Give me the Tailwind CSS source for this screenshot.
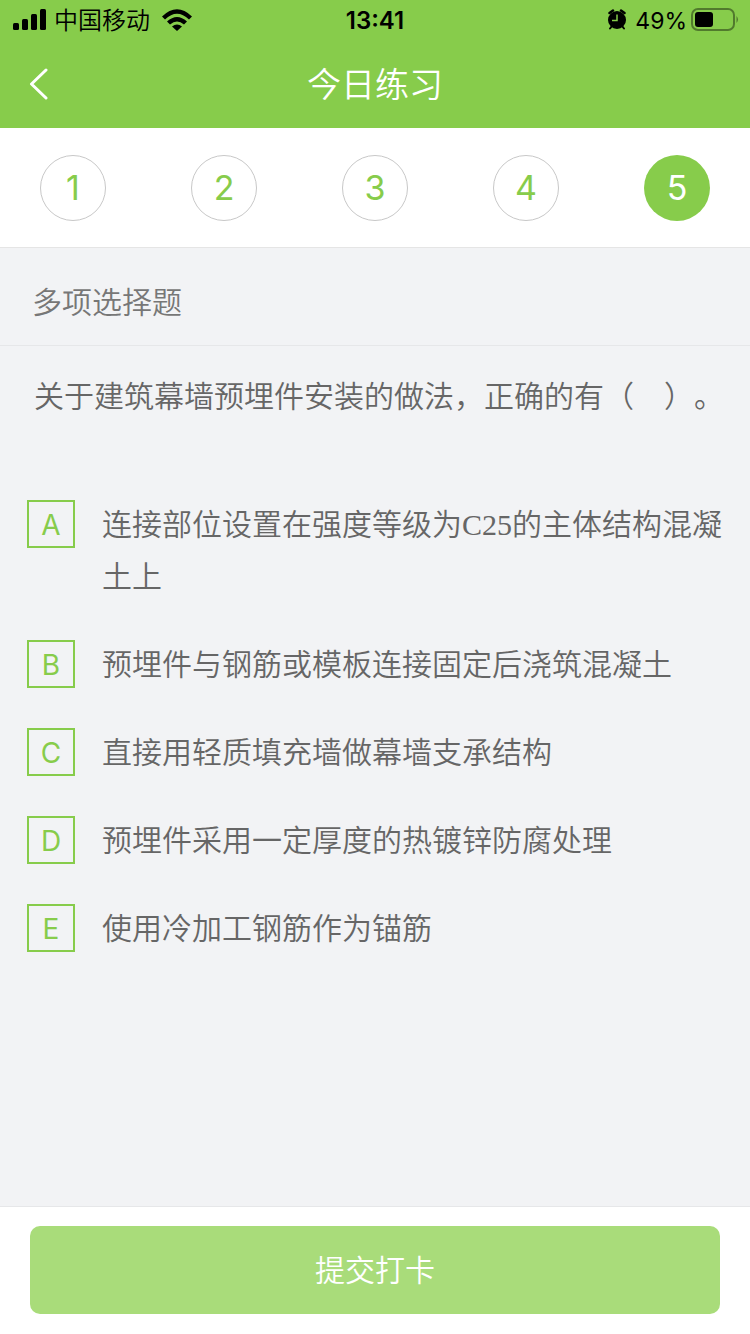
<!DOCTYPE html>
<html lang="zh-CN">
<head>
    <meta charset="UTF-8">
    <meta name="viewport" content="width=device-width, initial-scale=1.0">
    <title>今日练习</title>
    <script src="https://cdn.jsdelivr.net/npm/@tailwindcss/browser@4"></script>
    <style>
        body {
            font-family: Inter, 'Noto Sans CJK SC', sans-serif;
            text-spacing-trim: space-all;
        }
        .content-font {
            font-family: 'Liberation Serif', 'Noto Sans CJK SC', serif;
        }
    </style>
</head>
<body class="flex min-h-screen flex-col bg-[#f2f3f5] font-[350] text-[#666]">

    <header class="bg-[#87cc4b]">
        <!-- Status bar -->
        <div class="grid h-10 grid-cols-3 items-center pl-3 pr-3 text-2xl text-black">
            <div class="flex items-center">
                <svg class="mr-2 h-[22px] w-[34px]" viewBox="0 0 34 22" aria-hidden="true">
                    <rect x="1" y="14" width="6" height="7" rx="1.5"/>
                    <rect x="10" y="10" width="6" height="11" rx="1.5"/>
                    <rect x="19" y="5" width="6" height="16" rx="1.5"/>
                    <rect x="28" y="0" width="6" height="21" rx="1.5"/>
                </svg>
                <span class="mr-3 pt-0.5">中国移动</span>
                <svg class="h-[22px] w-[30px]" viewBox="0 0 30 22" aria-hidden="true">
                    <path d="M0 7.500 Q15 -7 30 7.500 L27 10.500 Q15 -1 3 10.500Z"/>
                    <path d="M5 12.500 Q15 3.500 25 12.500 L22 15.500 Q15 9.500 8 15.500Z"/>
                    <path d="M10 17.500 Q15 13.500 20 17.500 L15 22Z"/>
                </svg>
            </div>
            <div class="pt-0.5 text-center font-semibold">13:41</div>
            <div class="flex items-center justify-end">
                <svg class="mr-2 h-[22px] w-5" viewBox="0 0 20 22" aria-hidden="true">
                    <path d="M2.500 4 L6 1.500 M17.500 4 L14 1.500" stroke="#000" stroke-width="2.500" stroke-linecap="round"/>
                    <path d="M5 17 L3 19.500 M15 17 L17 19.500" stroke="#000" stroke-width="2" stroke-linecap="round"/>
                    <circle cx="10" cy="11" r="9"/>
                    <path d="M10 5.500 V11.500 H5" fill="none" stroke="#87cc4b" stroke-width="1.500"/>
                </svg>
                <span class="mr-1 pt-0.5 text-[23px] font-normal">49%</span>
                <svg class="-mr-px h-6 w-12" viewBox="0 0 48 24" aria-hidden="true">
                    <rect x="1" y="1" width="42" height="21" rx="6" fill="none" stroke="#000" stroke-opacity=".4" stroke-width="2"/>
                    <rect x="4" y="4" width="18" height="15" rx="3"/>
                    <path d="M45.500 8 Q48.500 11.500 45.500 15Z" fill-opacity=".4"/>
                </svg>
            </div>
        </div>

        <!-- Title bar -->
        <div class="grid h-22 grid-cols-[80px_1fr_80px] items-center text-white">
            <button type="button" aria-label="返回" class="flex h-full items-center pl-7">
                <svg class="h-8 w-6" viewBox="0 0 24 32" fill="none" stroke="currentColor" stroke-width="3" stroke-linecap="round" stroke-linejoin="round">
                    <path d="M18 2 L3.500 16 L18 30"/>
                </svg>
            </button>
            <h1 class="text-center text-[34px] font-[350]">今日练习</h1>
        </div>
    </header>

    <!-- Question numbers -->
    <nav class="flex h-30 items-center justify-between border-b border-[#e5e5e5] bg-white px-10 text-[34px] font-normal text-[#87cc4b]">
        <button type="button" class="size-[66px] rounded-full border border-[#c8c8c8]">1</button>
        <button type="button" class="size-[66px] rounded-full border border-[#c8c8c8]">2</button>
        <button type="button" class="size-[66px] rounded-full border border-[#c8c8c8]">3</button>
        <button type="button" class="size-[66px] rounded-full border border-[#c8c8c8]">4</button>
        <button type="button" aria-current="true" class="size-[66px] rounded-full bg-[#87cc4b] text-white">5</button>
    </nav>

    <h2 class="border-b border-[#e6e7e9] px-8 pt-7 pb-4 text-[30px] leading-[53px] font-[350] text-[#777]">多项选择题</h2>

    <main class="content-font flex-1 text-[30px] leading-[52px]">
        <p id="question" class="pt-[25px] pr-6 pl-[34px]">关于建筑幕墙预埋件安装的做法，正确的有（　）。</p>

        <!-- Answers -->
        <div role="group" aria-labelledby="question" class="flex flex-col gap-9 px-[27px] pt-[76px] pb-9">
            <label class="flex items-start gap-[27px]">
                <span class="grid shrink-0 place-items-center pt-px font-[Inter] text-[28px] leading-[46px] font-normal text-[#87cc4b]">
                    <input type="checkbox" name="answer" value="A" class="col-start-1 row-start-1 size-12 appearance-none border-2 border-[#87cc4b] checked:bg-[#87cc4b]/20">
                    <span class="col-start-1 row-start-1 pt-0.5">A</span>
                </span>
                <span>连接部位设置在强度等级为C25的主体结构混凝土上</span>
            </label>
            <label class="flex items-start gap-[27px]">
                <span class="grid shrink-0 place-items-center pt-px font-[Inter] text-[28px] leading-[46px] font-normal text-[#87cc4b]">
                    <input type="checkbox" name="answer" value="B" class="col-start-1 row-start-1 size-12 appearance-none border-2 border-[#87cc4b] checked:bg-[#87cc4b]/20">
                    <span class="col-start-1 row-start-1 pt-0.5">B</span>
                </span>
                <span>预埋件与钢筋或模板连接固定后浇筑混凝土</span>
            </label>
            <label class="flex items-start gap-[27px]">
                <span class="grid shrink-0 place-items-center pt-px font-[Inter] text-[28px] leading-[46px] font-normal text-[#87cc4b]">
                    <input type="checkbox" name="answer" value="C" class="col-start-1 row-start-1 size-12 appearance-none border-2 border-[#87cc4b] checked:bg-[#87cc4b]/20">
                    <span class="col-start-1 row-start-1 pt-0.5">C</span>
                </span>
                <span>直接用轻质填充墙做幕墙支承结构</span>
            </label>
            <label class="flex items-start gap-[27px]">
                <span class="grid shrink-0 place-items-center pt-px font-[Inter] text-[28px] leading-[46px] font-normal text-[#87cc4b]">
                    <input type="checkbox" name="answer" value="D" class="col-start-1 row-start-1 size-12 appearance-none border-2 border-[#87cc4b] checked:bg-[#87cc4b]/20">
                    <span class="col-start-1 row-start-1 pt-0.5">D</span>
                </span>
                <span>预埋件采用一定厚度的热镀锌防腐处理</span>
            </label>
            <label class="flex items-start gap-[27px]">
                <span class="grid shrink-0 place-items-center pt-px font-[Inter] text-[28px] leading-[46px] font-normal text-[#87cc4b]">
                    <input type="checkbox" name="answer" value="E" class="col-start-1 row-start-1 size-12 appearance-none border-2 border-[#87cc4b] checked:bg-[#87cc4b]/20">
                    <span class="col-start-1 row-start-1 pt-0.5">E</span>
                </span>
                <span>使用冷加工钢筋作为锚筋</span>
            </label>
        </div>
    </main>

    <footer class="border-t border-[#e6e7e9] bg-white px-[30px] pt-[19px] pb-5">
        <button type="submit" class="h-22 w-full rounded-[10px] bg-[#a9dc7a] text-[30px] font-[350] text-white">提交打卡</button>
    </footer>

</body>
</html>
